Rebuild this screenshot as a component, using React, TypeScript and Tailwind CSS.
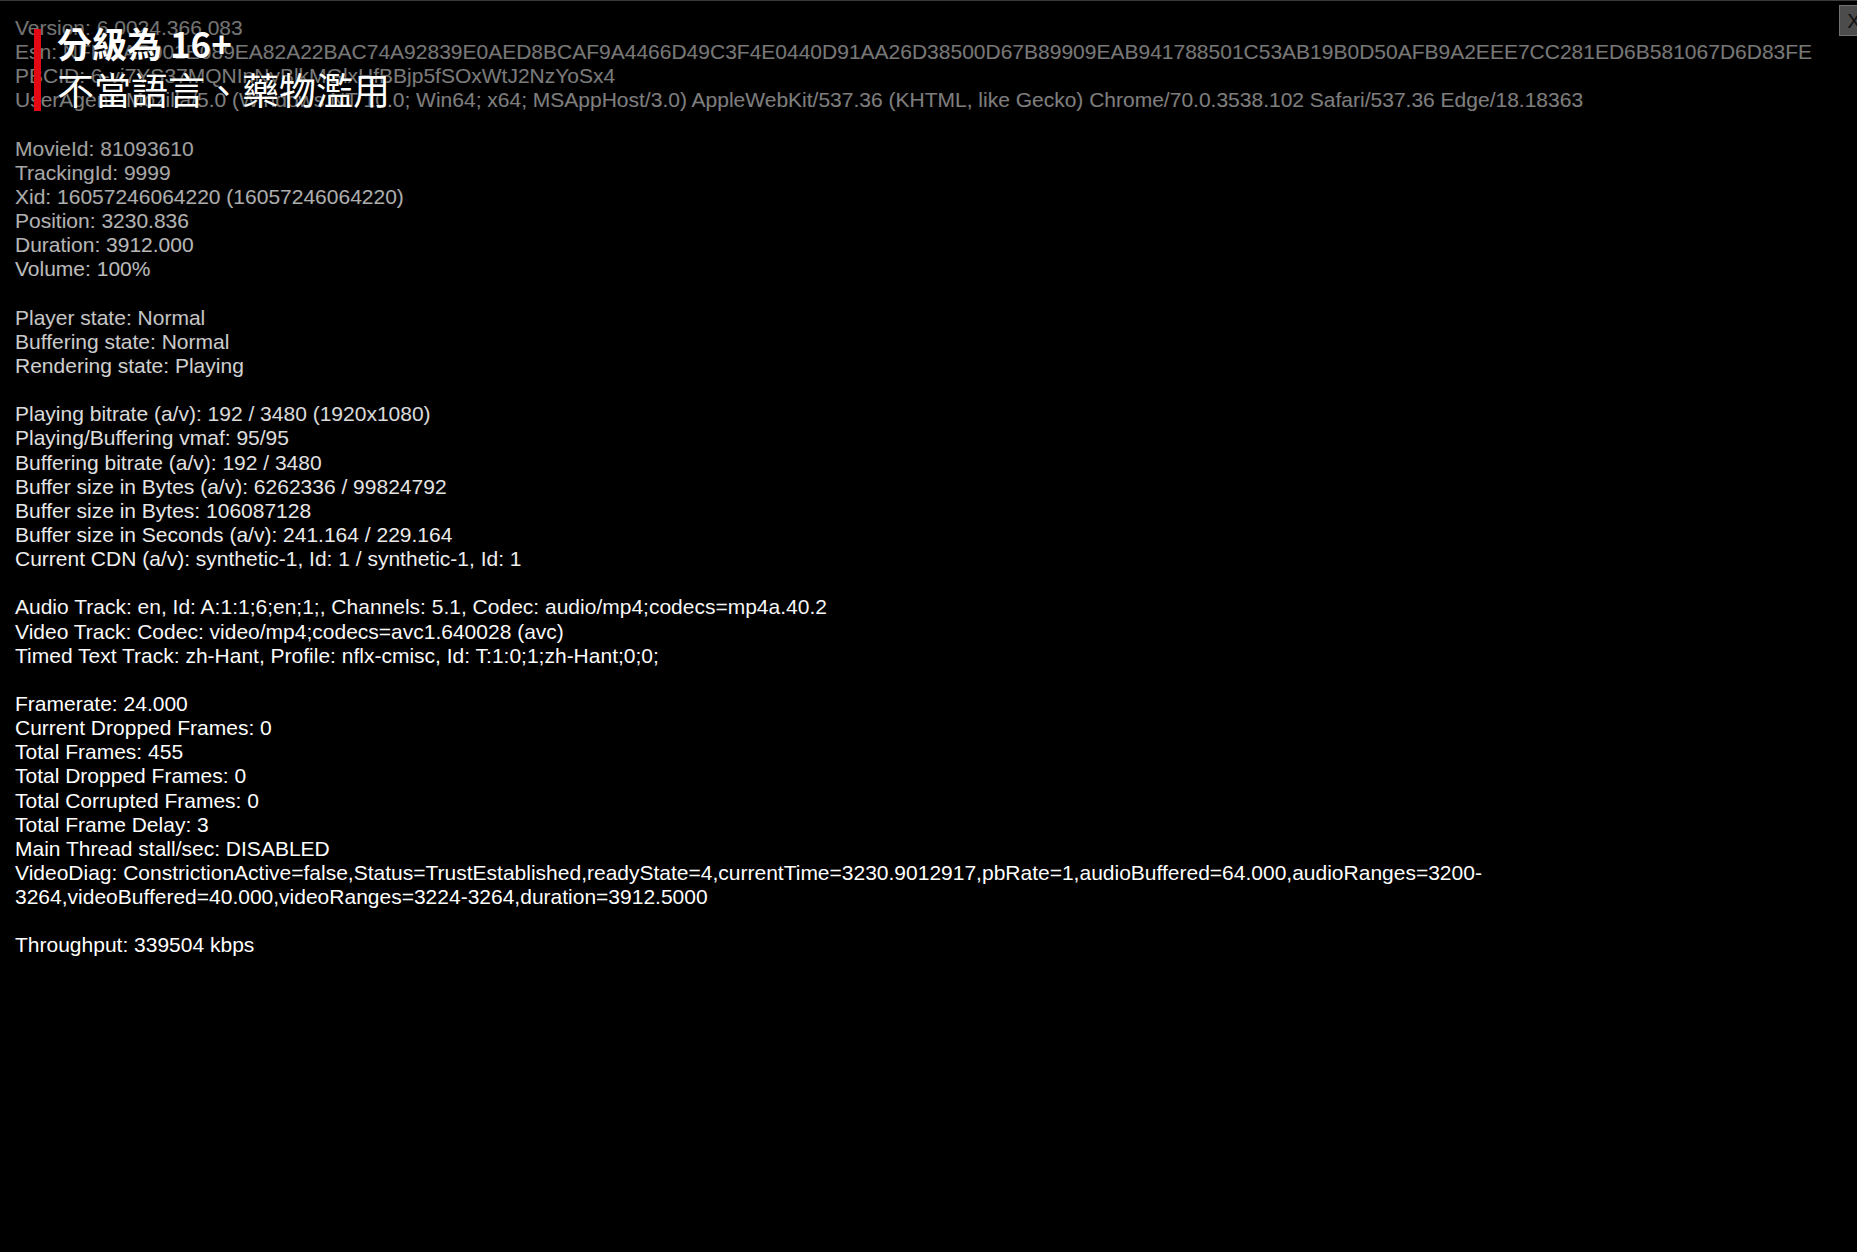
const lines = [
  "Version: 6.0024.366.083",
  "Esn: NFFWAP001E089EA82A22BAC74A92839E0AED8BCAF9A4466D49C3F4E0440D91AA26D38500D67B89909EAB941788501C53AB19B0D50AFB9A2EEE7CC281ED6B581067D6D83FE",
  "PBCID: 6-vi7YS37MQNInNyBlkMGlxHfBBjp5fSOxWtJ2NzYoSx4",
  "UserAgent: Mozilla/5.0 (Windows NT 10.0; Win64; x64; MSAppHost/3.0) AppleWebKit/537.36 (KHTML, like Gecko) Chrome/70.0.3538.102 Safari/537.36 Edge/18.18363",
  "",
  "MovieId: 81093610",
  "TrackingId: 9999",
  "Xid: 16057246064220 (16057246064220)",
  "Position: 3230.836",
  "Duration: 3912.000",
  "Volume: 100%",
  "",
  "Player state: Normal",
  "Buffering state: Normal",
  "Rendering state: Playing",
  "",
  "Playing bitrate (a/v): 192 / 3480 (1920x1080)",
  "Playing/Buffering vmaf: 95/95",
  "Buffering bitrate (a/v): 192 / 3480",
  "Buffer size in Bytes (a/v): 6262336 / 99824792",
  "Buffer size in Bytes: 106087128",
  "Buffer size in Seconds (a/v): 241.164 / 229.164",
  "Current CDN (a/v): synthetic-1, Id: 1 / synthetic-1, Id: 1",
  "",
  "Audio Track: en, Id: A:1:1;6;en;1;, Channels: 5.1, Codec: audio/mp4;codecs=mp4a.40.2",
  "Video Track: Codec: video/mp4;codecs=avc1.640028 (avc)",
  "Timed Text Track: zh-Hant, Profile: nflx-cmisc, Id: T:1:0;1;zh-Hant;0;0;",
  "",
  "Framerate: 24.000",
  "Current Dropped Frames: 0",
  "Total Frames: 455",
  "Total Dropped Frames: 0",
  "Total Corrupted Frames: 0",
  "Total Frame Delay: 3",
  "Main Thread stall/sec: DISABLED",
  "VideoDiag: ConstrictionActive=false,Status=TrustEstablished,readyState=4,currentTime=3230.9012917,pbRate=1,audioBuffered=64.000,audioRanges=3200-3264,videoBuffered=40.000,videoRanges=3224-3264,duration=3912.5000",
  "",
  "Throughput: 339504 kbps",
];

export default function App() {
  return (
    <div className="relative h-[1252px] w-full overflow-hidden border-t border-[#3a3a3a] bg-black">
      {/* debug info */}
      <div className="pl-[15px] pr-[40px] pt-[15px] font-['Liberation_Sans',Arial,sans-serif] text-[21px] leading-[1.15] text-white">
        {lines.map((line, i) =>
          line ? (
            <div key={i} className="break-words">
              {line}
            </div>
          ) : (
            <div key={i} className="h-[1.15em]" />
          )
        )}
      </div>

      {/* top shade */}
      <div className="pointer-events-none absolute inset-x-0 top-0 h-[720px] bg-[linear-gradient(to_bottom,rgba(0,0,0,0.56)_0px,rgba(0,0,0,0.5)_112px,rgba(0,0,0,0.38)_130px,rgba(0,0,0,0.3)_220px,rgba(0,0,0,0.22)_330px,rgba(0,0,0,0.14)_420px,rgba(0,0,0,0.08)_540px,rgba(0,0,0,0.03)_620px,rgba(0,0,0,0)_700px)]" />

      {/* rating */}
      <div className="absolute left-[34px] top-[18px] flex items-start gap-[16px] font-['Noto_Sans_CJK_TC','Noto_Sans',sans-serif] text-white">
        <div className="mt-[10px] h-[82px] w-[7px] bg-[#e50914]" />
        <div>
          <div className="text-[35px] font-bold leading-[47px] [text-shadow:0_0_3px_rgba(0,0,0,0.7)]">分級為 16+</div>
          <div className="text-[37px] font-normal leading-[46px] [text-shadow:0_0_2px_rgba(0,0,0,0.9)]">不當語言、藥物濫用</div>
        </div>
      </div>

      <button className="absolute right-[-12px] top-[4px] flex h-[31px] w-[30px] items-center justify-center border border-[#707070] bg-[#4c4c4c] font-['Liberation_Sans',sans-serif] text-[20px] text-[#111]">
        X
      </button>
    </div>
  );
}
